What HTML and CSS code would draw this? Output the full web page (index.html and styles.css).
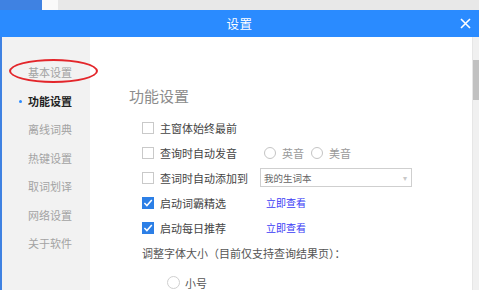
FILE: index.html
```html
<!DOCTYPE html>
<html lang="zh-CN">
<head>
  <meta charset="UTF-8" />
  <title>设置</title>
  <link rel="stylesheet" href="styles.css">
</head>
<body>
  <div class="topstrip">
    <div class="tab-blue"></div>
    <div class="tab-white"></div>
    <div class="tab-gray"></div>
  </div>

  <div class="dialog">
    <div class="titlebar">
      <span class="title">设置</span>
      <svg class="close" width="11" height="11" viewBox="0 0 11 11">
        <path d="M1 1 L10 10 M10 1 L1 10" stroke="#fff" stroke-width="1.6" fill="none" />
      </svg>
    </div>

    <div class="dialog-body">
      <!-- Menu de gauche -->
      <ul class="sidebar">
        <li>基本设置</li>
        <li class="active">功能设置</li>
        <li>离线词典</li>
        <li>热键设置</li>
        <li>取词划译</li>
        <li>网络设置</li>
        <li>关于软件</li>
      </ul>
      <div class="annotation"></div>

      <!-- Contenu -->
      <div class="content">
        <h2>功能设置</h2>

        <div class="row">
          <span class="check"></span>
          <span class="label">主窗体始终最前</span>
        </div>
        <div class="row">
          <span class="check"></span>
          <span class="label">查询时自动发音</span>
          <span class="radio-group">
            <span class="radio"></span><span class="muted">英音</span>
            <span class="radio"></span><span class="muted">美音</span>
          </span>
        </div>
        <div class="row">
          <span class="check"></span>
          <span class="label">查词时自动添加到</span>
          <div class="select">
            <span>我的生词本</span>
            <span class="arrow">▾</span>
          </div>
        </div>
        <div class="row">
          <span class="check checked">
            <svg width="12" height="12" viewBox="0 0 12 12"><path d="M2.4 6 L4.9 8.6 L9.8 3" stroke="#fff" stroke-width="1.5" fill="none" /></svg>
          </span>
          <span class="label">启动词霸精选</span>
          <a href="#" class="link">立即查看</a>
        </div>
        <div class="row">
          <span class="check checked">
            <svg width="12" height="12" viewBox="0 0 12 12"><path d="M2.4 6 L4.9 8.6 L9.8 3" stroke="#fff" stroke-width="1.5" fill="none" /></svg>
          </span>
          <span class="label">启动每日推荐</span>
          <a href="#" class="link">立即查看</a>
        </div>
        <div class="row plain">调整字体大小（目前仅支持查询结果页）：</div>
        <div class="row size-row">
          <span class="radio big"></span>
          <span>小号</span>
        </div>
      </div>

      <div class="scrollbar"><div class="thumb"></div></div>
    </div>
  </div>
</body>
</html>
```

FILE: styles.css
```css
/* --- Reset --- */
* {
  margin: 0;
  padding: 0;
  box-sizing: border-box;
}
html,
body {
  width: 479px;
  height: 307px;
  overflow: hidden;
  background: #ffffff;
  font-family: "Noto Sans CJK SC", "Noto Sans", sans-serif;
  color: #333;
}

/* --- Bande du haut --- */
.topstrip {
  height: 10px;
  display: flex;
  background: #e9e9e9;
}
.tab-blue {
  width: 42px;
  background: #3f82e2;
}
.tab-white {
  width: 16px;
  background: #fafafa;
}
.tab-gray {
  flex: 1;
  background: #e8e8e8;
}

/* --- Fenêtre --- */
.titlebar {
  height: 27px;
  background: #2a8bff;
  display: flex;
  align-items: center;
  justify-content: center;
  position: relative;
}
.title {
  color: #ffffff;
  font-size: 12.5px;
  letter-spacing: 0.5px;
}
.close {
  position: absolute;
  right: 8px;
  top: 8px;
}

.dialog-body {
  height: 253px;
  display: flex;
  position: relative;
  border-left: 2px solid #3f82e2;
}

/* --- Menu --- */
.sidebar {
  list-style: none;
  width: 88px;
  background: #f2f2f2;
  padding-top: 21px;
}
.sidebar li {
  height: 28.5px;
  line-height: 28.5px;
  font-size: 11px;
  color: #a3a3a3;
  padding-left: 26px;
  position: relative;
}
.sidebar li.active {
  color: #222;
  font-weight: 700;
}
.sidebar li.active::before {
  content: "";
  position: absolute;
  left: 17px;
  top: 13px;
  width: 3px;
  height: 3px;
  border-radius: 50%;
  background: #2a8bff;
}
.annotation {
  position: absolute;
  left: 7px;
  top: 22px;
  width: 89px;
  height: 24px;
  border: 2px solid #e3262b;
  border-radius: 50%;
}

/* --- Contenu --- */
.content {
  flex: 1;
  padding: 49px 0 0 39px;
}
.content h2 {
  font-size: 15px;
  font-weight: 400;
  line-height: 20px;
  color: #8c8c8c;
  margin-bottom: 9px;
}
.row {
  height: 25px;
  display: flex;
  align-items: center;
  margin-left: 13px;
  font-size: 11px;
  color: #444;
}
.check {
  width: 12px;
  height: 12px;
  border: 1px solid #c9c9c9;
  background: #fff;
  margin-right: 6px;
  display: flex;
}
.check.checked {
  border: none;
  background: #2c7fe6;
}
.label {
  width: 100px;
  white-space: nowrap;
}
.radio-group {
  display: flex;
  align-items: center;
  margin-left: 4px;
}
.radio {
  width: 12px;
  height: 12px;
  border: 1px solid #c4c4c4;
  border-radius: 50%;
  margin-right: 6px;
}
.radio-group .muted {
  color: #9a9a9a;
  margin-right: 7px;
}
.select {
  width: 152px;
  height: 19px;
  border: 1px solid #cfcfcf;
  display: flex;
  align-items: center;
  justify-content: space-between;
  padding: 0 4px 0 3px;
  font-size: 9.5px;
  color: #666;
}
.select .arrow {
  font-size: 8px;
  color: #c8c8c8;
}
.link {
  margin-left: 6px;
  font-size: 10px;
  color: #3b3bf5;
  text-decoration: none;
}
.row.plain {
  color: #555;
}
.size-row {
  margin-top: 5px;
  margin-left: 38px;
  color: #555;
}
.radio.big {
  width: 13px;
  height: 13px;
  border-color: #cfcfcf;
  margin-right: 5px;
}

/* --- Barre de défilement --- */
.scrollbar {
  width: 7px;
  background: #f0f0f0;
  border-left: 1px solid #e6e6e6;
  padding-top: 23px;
}
.thumb {
  height: 40px;
  background: #c1c1c1;
}
```
